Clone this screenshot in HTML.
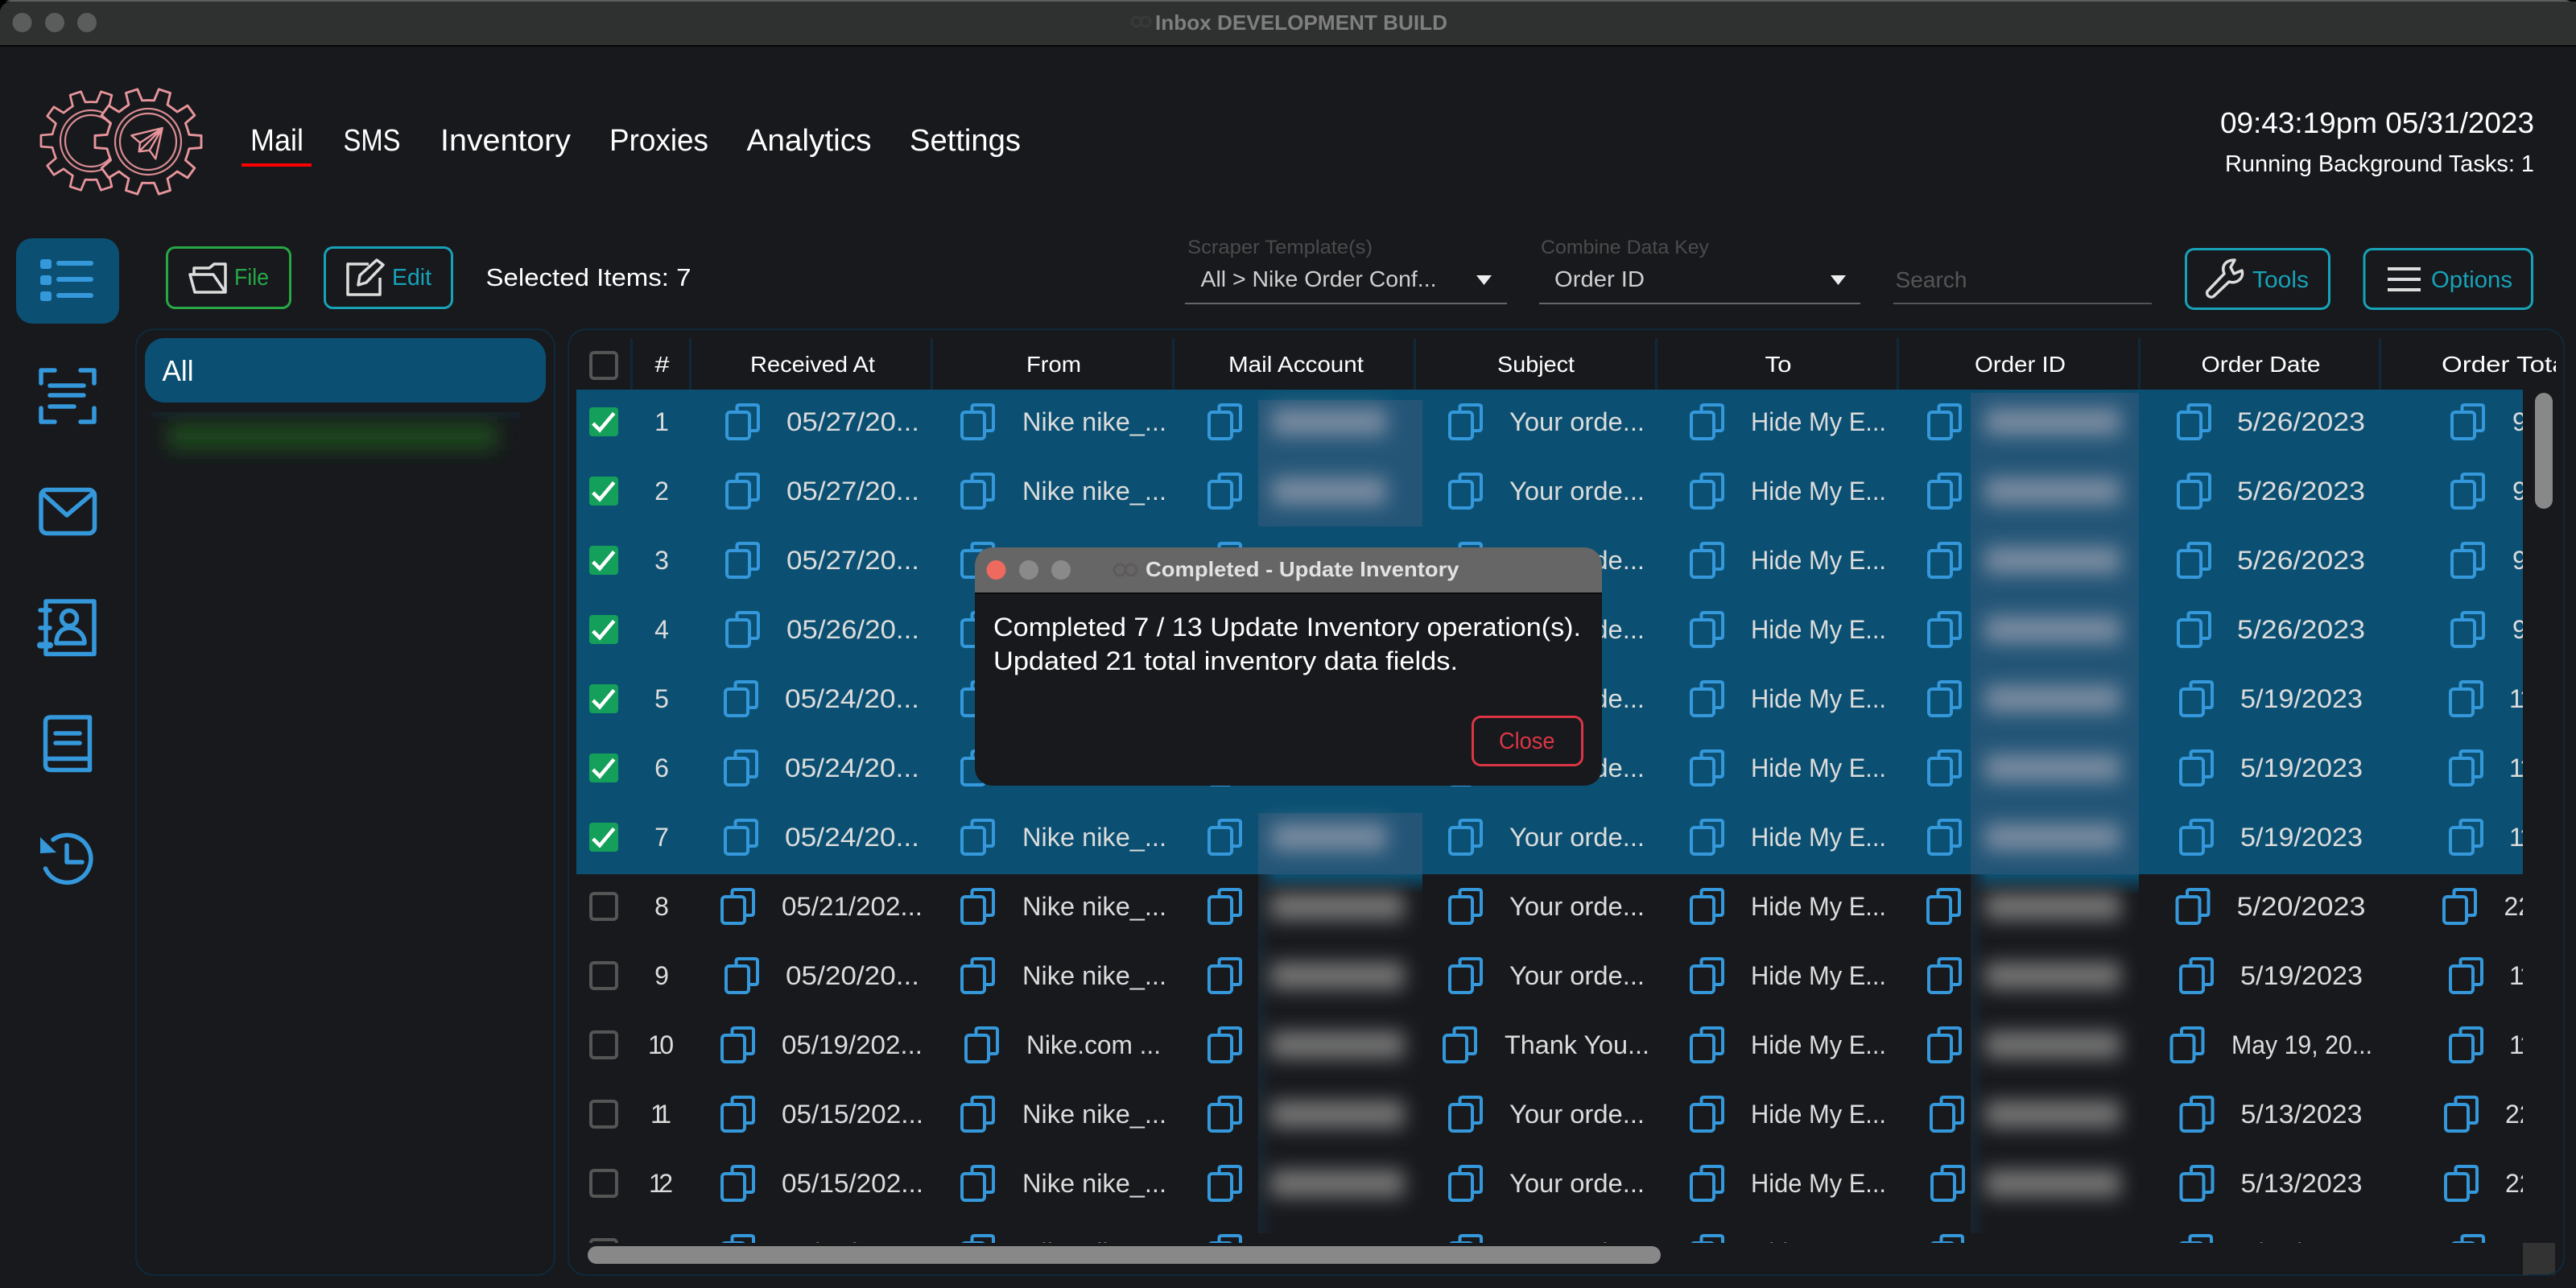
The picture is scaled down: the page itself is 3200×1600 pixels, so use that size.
<!DOCTYPE html>
<html><head><meta charset="utf-8"><title>Inbox DEVELOPMENT BUILD</title>
<style>
html,body{margin:0;padding:0;background:#17191d;width:3200px;height:1600px;overflow:hidden}
svg{display:block;font-family:"Liberation Sans",sans-serif}
.r text{font-size:32px;fill:#dcdcdc}
.r .n{text-anchor:middle}
.h text{font-size:28px;fill:#fff}
.nav text{font-size:38px;fill:#fff}
.bl{fill:none;stroke:#3498db;stroke-width:5.5;stroke-linecap:round;stroke-linejoin:round}
.wi{fill:none;stroke:#ddd;stroke-width:3.5;stroke-linejoin:round}
</style></head><body>
<svg width="3200" height="1600" viewBox="0 0 3200 1600" xmlns="http://www.w3.org/2000/svg">
<defs>
<filter id="b" x="-30%" y="-120%" width="160%" height="340%"><feGaussianBlur stdDeviation="12"/></filter>
<clipPath id="rows"><rect x="716" y="484" width="2418" height="1060"/></clipPath>
<clipPath id="mailc"><rect x="1563" y="484" width="204" height="1060"/></clipPath>
<clipPath id="ordc"><rect x="2448" y="484" width="209" height="1060"/></clipPath>
<clipPath id="hdc"><rect x="716" y="410" width="2459" height="74"/></clipPath>
<clipPath id="grc"><rect x="188" y="512" width="458" height="65"/></clipPath>
<linearGradient id="fd" x1="0" y1="0" x2="0" y2="1"><stop offset="0" stop-color="#0b5072"/><stop offset="1" stop-color="#0b5072" stop-opacity="0"/></linearGradient>
<linearGradient id="fl" x1="0" y1="0" x2="1" y2="0"><stop offset="0" stop-color="#19242e"/><stop offset="1" stop-color="#19242e" stop-opacity="0"/></linearGradient>
<linearGradient id="ft" x1="0" y1="0" x2="0" y2="1"><stop offset="0" stop-color="#18222c"/><stop offset="1" stop-color="#18222c" stop-opacity="0"/></linearGradient>
<g id="c" fill="none" stroke="#3498db" stroke-width="4" stroke-linejoin="round"><path d="M14.5 9V5q0-3 3-3H38q3 0 3 3V31q0 3-3 3H32"/><rect x="2" y="11" width="28" height="33" rx="4"/></g>
<g id="k"><rect width="36" height="36" rx="4" fill="#14a05a"/><path d="M4.7 20L13 28.3L30.7 7.3" fill="none" stroke="#fff" stroke-width="4.5"/></g>
<g id="u"><rect x="2" y="2" width="32" height="32" rx="4" fill="none" stroke="#555" stroke-width="4"/></g>
<path id="t" d="M-15.9-48.9L-8.7-51L-7.5-66H7.5L8.7-51L15.9-48.9"/>
<g id="gear" fill="#17191d" stroke="#e8959b" stroke-width="2.9" stroke-linejoin="round">
<circle r="50" stroke="none"/>
<use href="#t" transform="rotate(18)"/><use href="#t" transform="rotate(54)"/><use href="#t" transform="rotate(90)"/><use href="#t" transform="rotate(126)"/><use href="#t" transform="rotate(162)"/><use href="#t" transform="rotate(198)"/><use href="#t" transform="rotate(234)"/><use href="#t" transform="rotate(270)"/><use href="#t" transform="rotate(306)"/><use href="#t" transform="rotate(342)"/>
</g>
<g id="logo">
<g transform="translate(113,175) scale(.94)"><use href="#gear"/></g>
<g fill="none" stroke="#d98c92" stroke-width="2.2"><circle cx="113" cy="175" r="38"/><circle cx="113" cy="175" r="32"/></g>
<g transform="translate(184,176)"><use href="#gear"/></g>
<g fill="none" stroke="#d98c92" stroke-width="2.2"><circle cx="184" cy="176" r="41"/><circle cx="184" cy="176" r="35"/></g>
<path d="M201.7 159L163.3 168.3L174 177.3L172.7 188.3L185.7 186.7L193.3 197.3ZM201.7 159L174 177.3M201.7 159L172.7 188.3M201.7 159L185.7 186.7" fill="none" stroke="#e8959b" stroke-width="2.4" stroke-linejoin="round"/>
</g>
</defs>

<rect width="3200" height="1600" fill="#17191d"/>

<!-- title bar -->
<rect x="0" y="0" width="3200" height="58" fill="#000"/>
<rect x="0" y="0" width="3200" height="70" rx="14" fill="#5c5d5c"/>
<rect x="0" y="2" width="3200" height="54" fill="#2f3130"/>
<path d="M0 14a14 14 0 0 1 14-12H0Z" fill="#000"/>
<rect y="56" width="3200" height="2" fill="#050505"/>
<rect y="58" width="3200" height="14" fill="#17191d"/>
<circle cx="27.5" cy="28" r="12" fill="#5b5d5c"/><circle cx="68" cy="28" r="12" fill="#5b5d5c"/><circle cx="108" cy="28" r="12" fill="#5b5d5c"/>
<g fill="none" stroke="#383a39" stroke-width="3"><circle cx="1412" cy="27" r="6"/><circle cx="1423" cy="27" r="6"/></g>
<text x="1435" y="37" font-size="26" font-weight="bold" fill="#7e7f7e" textLength="363" lengthAdjust="spacingAndGlyphs">Inbox DEVELOPMENT BUILD</text>

<!-- logo & nav -->
<use href="#logo"/>
<g class="nav">
<text x="311" y="187" textLength="66" lengthAdjust="spacingAndGlyphs">Mail</text>
<text x="426.5" y="187" textLength="71" lengthAdjust="spacingAndGlyphs">SMS</text>
<text x="547" y="187" textLength="162" lengthAdjust="spacingAndGlyphs">Inventory</text>
<text x="757" y="187" textLength="123" lengthAdjust="spacingAndGlyphs">Proxies</text>
<text x="927.5" y="187" textLength="155" lengthAdjust="spacingAndGlyphs">Analytics</text>
<text x="1130" y="187" textLength="138" lengthAdjust="spacingAndGlyphs">Settings</text>
</g>
<rect x="300" y="203" width="87" height="4" fill="#f00"/>
<text x="2758" y="165" font-size="36" fill="#fff" textLength="390" lengthAdjust="spacingAndGlyphs">09:43:19pm 05/31/2023</text>
<text x="2764" y="213" font-size="29" fill="#fff" textLength="384" lengthAdjust="spacingAndGlyphs">Running Background Tasks: 1</text>

<!-- sidebar -->
<rect x="20" y="296" width="128" height="106" rx="20" fill="#0b5072"/>
<g fill="#3498db"><rect x="50" y="322" width="14" height="12" rx="3"/><rect x="50" y="342" width="14" height="12" rx="3"/><rect x="50" y="362" width="14" height="12" rx="3"/><rect x="70" y="324" width="46" height="6" rx="3"/><rect x="70" y="344" width="46" height="6" rx="3"/><rect x="70" y="364" width="46" height="6" rx="3"/></g>
<g class="bl">
<path d="M51 476V460H68M100 460H117V476M51 507V524H68M100 524H117V507"/>
<path d="M62 479H104M62 491H104M62 505H92"/>
<rect x="51" y="608.5" width="66.500" height="54" rx="7"/><path d="M53 613L83 640L115 613"/>
<path d="M57 747H117V812.500H57Z"/><path d="M50 758H62M50 780H62"/><path d="M50 801.500H62" stroke-width="8"/>
<circle cx="86" cy="768" r="9.500"/><path d="M70 799C70 786 78 780 86 780C95 780 105 787 105 799Z"/>
<path d="M63 891H111.500V956.500H64Q56.500 956.500 56.500 950V897Q56.500 891 63 891Z"/><path d="M69 911H99M69 923H99M57 942.500H111"/>
<path d="M56.500 1079A29.500 29.500 0 1 0 66 1043"/><path d="M83 1050V1071H102"/>
</g>
<path d="M50 1040V1060L70 1059Z" fill="#3498db"/>

<!-- toolbar -->
<rect x="207.500" y="307.500" width="153" height="75" rx="10" fill="none" stroke="#28a745" stroke-width="3"/>
<path class="wi" d="M241 341V333H260L266 328H280V363M236 341H265L280 363H242Z"/>
<text x="291" y="354" font-size="29" fill="#28a745" textLength="43" lengthAdjust="spacingAndGlyphs">File</text>
<rect x="403.500" y="307.500" width="158" height="75" rx="10" fill="none" stroke="#17a2b8" stroke-width="3"/>
<path class="wi" d="M458 328H432V366H472V345M445 354L447 342L468 323L476 329L455 351Z"/>
<text x="487" y="354" font-size="29" fill="#17a2b8" textLength="49" lengthAdjust="spacingAndGlyphs">Edit</text>
<text x="603.500" y="355" font-size="31" fill="#fff" textLength="255" lengthAdjust="spacingAndGlyphs">Selected Items: 7</text>

<text x="1475" y="315" font-size="24" fill="#4b4b4b" textLength="230" lengthAdjust="spacingAndGlyphs">Scraper Template(s)</text>
<text x="1491.500" y="356" font-size="28" fill="#cfcfcf" textLength="293" lengthAdjust="spacingAndGlyphs">All &gt; Nike Order Conf...</text>
<path d="M1834 342H1853L1843.500 354Z" fill="#eee"/>
<rect x="1472" y="376" width="400" height="2" fill="#666"/>
<text x="1914" y="315" font-size="24" fill="#4b4b4b" textLength="209" lengthAdjust="spacingAndGlyphs">Combine Data Key</text>
<text x="1931" y="356" font-size="28" fill="#cfcfcf" textLength="112" lengthAdjust="spacingAndGlyphs">Order ID</text>
<path d="M2274 342H2293L2283.500 354Z" fill="#eee"/>
<rect x="1912" y="376" width="399" height="2" fill="#666"/>
<text x="2354.500" y="357" font-size="28" fill="#555" textLength="89" lengthAdjust="spacingAndGlyphs">Search</text>
<rect x="2352" y="376" width="321" height="2" fill="#555"/>
<rect x="2715.500" y="309.500" width="178" height="74" rx="10" fill="none" stroke="#17a2b8" stroke-width="3"/>
<path class="wi" d="M2742 362L2763 340C2759 330 2765 323 2776 323L2771 332L2775 340L2785 336C2788 346 2778 353 2769 350L2750 368C2746 371 2740 367 2742 362Z"/>
<text x="2798" y="357" font-size="29" fill="#17a2b8" textLength="70" lengthAdjust="spacingAndGlyphs">Tools</text>
<rect x="2937" y="309.500" width="208.500" height="74" rx="10" fill="none" stroke="#17a2b8" stroke-width="3"/>
<path d="M2966 334H3007M2966 347H3007M2966 360H3007" stroke="#ddd" stroke-width="4" fill="none"/>
<text x="3020" y="357" font-size="29" fill="#17a2b8" textLength="101" lengthAdjust="spacingAndGlyphs">Options</text>

<!-- left panel -->
<rect x="169" y="409" width="520" height="1175" rx="22" fill="none" stroke="#10293a" stroke-width="2"/>
<rect x="180" y="420" width="498" height="80" rx="24" fill="#0b5072"/>
<text x="201.500" y="473" font-size="36" fill="#fff" textLength="39" lengthAdjust="spacingAndGlyphs">All</text>
<g clip-path="url(#grc)"><rect x="188" y="512" width="458" height="12" fill="url(#ft)"/><rect x="208" y="525" width="410" height="34" fill="#1d471a" filter="url(#b)"/></g>

<!-- table panel -->
<rect x="706" y="409" width="2479" height="1175" rx="22" fill="none" stroke="#10293a" stroke-width="2"/>
<g fill="#10293a"><rect x="783" y="420" width="3" height="64"/><rect x="856" y="420" width="3" height="64"/><rect x="1156" y="420" width="3" height="64"/><rect x="1456" y="420" width="3" height="64"/><rect x="1756" y="420" width="3" height="64"/><rect x="2056" y="420" width="3" height="64"/><rect x="2356" y="420" width="3" height="64"/><rect x="2656" y="420" width="3" height="64"/><rect x="2955" y="420" width="3" height="64"/></g>
<use href="#u" x="732" y="436"/>
<g class="h" clip-path="url(#hdc)">
<text x="813.500" y="462" textLength="18" lengthAdjust="spacingAndGlyphs">#</text>
<text x="932" y="462" textLength="155" lengthAdjust="spacingAndGlyphs">Received At</text>
<text x="1275" y="462" textLength="68" lengthAdjust="spacingAndGlyphs">From</text>
<text x="1526" y="462" textLength="168" lengthAdjust="spacingAndGlyphs">Mail Account</text>
<text x="1860" y="462" textLength="96" lengthAdjust="spacingAndGlyphs">Subject</text>
<text x="2192.500" y="462" textLength="33" lengthAdjust="spacingAndGlyphs">To</text>
<text x="2453" y="462" textLength="113" lengthAdjust="spacingAndGlyphs">Order ID</text>
<text x="2734.500" y="462" textLength="148" lengthAdjust="spacingAndGlyphs">Order Date</text>
<text x="3033" y="462" textLength="163" lengthAdjust="spacingAndGlyphs">Order Total</text>
</g>

<g clip-path="url(#rows)">
<rect x="716" y="484" width="2418" height="602" fill="#0b5072"/>
<!-- blocks behind blurred values -->
<rect x="1563" y="497" width="204" height="157" fill="#245577"/>
<rect x="1563" y="1010" width="204" height="76" fill="#245577"/>
<rect x="1563" y="1086" width="204" height="24" fill="url(#fd)"/>
<rect x="1563" y="1086" width="22" height="446" fill="url(#fl)"/>
<rect x="2448" y="488" width="209" height="598" fill="#225476"/>
<rect x="2448" y="1086" width="209" height="26" fill="url(#fd)"/>
<rect x="2448" y="1086" width="22" height="446" fill="url(#fl)"/>
<g clip-path="url(#mailc)">
<g fill="#798ba0" filter="url(#b)"><rect x="1580" y="507" width="142" height="34"/></g>
<g fill="#798ba0" filter="url(#b)"><rect x="1580" y="593" width="142" height="34"/></g>
<g fill="#798ba0" filter="url(#b)"><rect x="1580" y="1023" width="142" height="34"/></g>
<g fill="#757575" filter="url(#b)"><rect x="1578" y="1109" width="166" height="34"/></g>
<g fill="#757575" filter="url(#b)"><rect x="1578" y="1195" width="166" height="34"/></g>
<g fill="#757575" filter="url(#b)"><rect x="1578" y="1281" width="166" height="34"/></g>
<g fill="#757575" filter="url(#b)"><rect x="1578" y="1367" width="166" height="34"/></g>
<g fill="#757575" filter="url(#b)"><rect x="1578" y="1453" width="166" height="34"/></g>
</g>
<g clip-path="url(#ordc)">
<g fill="#798ba0" filter="url(#b)"><rect x="2466" y="507" width="168" height="34"/></g>
<g fill="#798ba0" filter="url(#b)"><rect x="2466" y="593" width="168" height="34"/></g>
<g fill="#798ba0" filter="url(#b)"><rect x="2466" y="679" width="168" height="34"/></g>
<g fill="#798ba0" filter="url(#b)"><rect x="2466" y="765" width="168" height="34"/></g>
<g fill="#798ba0" filter="url(#b)"><rect x="2466" y="851" width="168" height="34"/></g>
<g fill="#798ba0" filter="url(#b)"><rect x="2466" y="937" width="168" height="34"/></g>
<g fill="#798ba0" filter="url(#b)"><rect x="2466" y="1023" width="168" height="34"/></g>
<g fill="#757575" filter="url(#b)"><rect x="2466" y="1109" width="168" height="34"/></g>
<g fill="#757575" filter="url(#b)"><rect x="2466" y="1195" width="168" height="34"/></g>
<g fill="#757575" filter="url(#b)"><rect x="2466" y="1281" width="168" height="34"/></g>
<g fill="#757575" filter="url(#b)"><rect x="2466" y="1367" width="168" height="34"/></g>
<g fill="#757575" filter="url(#b)"><rect x="2466" y="1453" width="168" height="34"/></g>
</g>

<g class="r" transform="translate(0,535)"><use href="#k" x="732" y="-29"/><text class="n" x="822">1</text><use href="#c" x="901" y="-34"/><text x="977" textLength="165" lengthAdjust="spacingAndGlyphs">05/27/20...</text><use href="#c" x="1193" y="-34"/><text x="1270" textLength="179" lengthAdjust="spacingAndGlyphs">Nike nike_...</text><use href="#c" x="1500" y="-34"/><use href="#c" x="1799" y="-34"/><text x="1875" textLength="168" lengthAdjust="spacingAndGlyphs">Your orde...</text><use href="#c" x="2099" y="-34"/><text x="2175" textLength="168" lengthAdjust="spacingAndGlyphs">Hide My E...</text><use href="#c" x="2394" y="-34"/><use href="#c" x="2704" y="-34"/><text x="2779" textLength="159" lengthAdjust="spacingAndGlyphs">5/26/2023</text><use href="#c" x="3044" y="-34"/><text x="3121">90.00</text></g>
<g class="r" transform="translate(0,621)"><use href="#k" x="732" y="-29"/><text class="n" x="822">2</text><use href="#c" x="901" y="-34"/><text x="977" textLength="165" lengthAdjust="spacingAndGlyphs">05/27/20...</text><use href="#c" x="1193" y="-34"/><text x="1270" textLength="179" lengthAdjust="spacingAndGlyphs">Nike nike_...</text><use href="#c" x="1500" y="-34"/><use href="#c" x="1799" y="-34"/><text x="1875" textLength="168" lengthAdjust="spacingAndGlyphs">Your orde...</text><use href="#c" x="2099" y="-34"/><text x="2175" textLength="168" lengthAdjust="spacingAndGlyphs">Hide My E...</text><use href="#c" x="2394" y="-34"/><use href="#c" x="2704" y="-34"/><text x="2779" textLength="159" lengthAdjust="spacingAndGlyphs">5/26/2023</text><use href="#c" x="3044" y="-34"/><text x="3121">90.00</text></g>
<g class="r" transform="translate(0,707)"><use href="#k" x="732" y="-29"/><text class="n" x="822">3</text><use href="#c" x="901" y="-34"/><text x="977" textLength="165" lengthAdjust="spacingAndGlyphs">05/27/20...</text><use href="#c" x="1193" y="-34"/><text x="1270" textLength="179" lengthAdjust="spacingAndGlyphs">Nike nike_...</text><use href="#c" x="1500" y="-34"/><use href="#c" x="1799" y="-34"/><text x="1875" textLength="168" lengthAdjust="spacingAndGlyphs">Your orde...</text><use href="#c" x="2099" y="-34"/><text x="2175" textLength="168" lengthAdjust="spacingAndGlyphs">Hide My E...</text><use href="#c" x="2394" y="-34"/><use href="#c" x="2704" y="-34"/><text x="2779" textLength="159" lengthAdjust="spacingAndGlyphs">5/26/2023</text><use href="#c" x="3044" y="-34"/><text x="3121">90.00</text></g>
<g class="r" transform="translate(0,793)"><use href="#k" x="732" y="-29"/><text class="n" x="822">4</text><use href="#c" x="901" y="-34"/><text x="977" textLength="165" lengthAdjust="spacingAndGlyphs">05/26/20...</text><use href="#c" x="1193" y="-34"/><text x="1270" textLength="179" lengthAdjust="spacingAndGlyphs">Nike nike_...</text><use href="#c" x="1500" y="-34"/><use href="#c" x="1799" y="-34"/><text x="1875" textLength="168" lengthAdjust="spacingAndGlyphs">Your orde...</text><use href="#c" x="2099" y="-34"/><text x="2175" textLength="168" lengthAdjust="spacingAndGlyphs">Hide My E...</text><use href="#c" x="2394" y="-34"/><use href="#c" x="2704" y="-34"/><text x="2779" textLength="159" lengthAdjust="spacingAndGlyphs">5/26/2023</text><use href="#c" x="3044" y="-34"/><text x="3121">90.00</text></g>
<g class="r" transform="translate(0,879)"><use href="#k" x="732" y="-29"/><text class="n" x="822">5</text><use href="#c" x="899" y="-34"/><text x="975" textLength="167" lengthAdjust="spacingAndGlyphs">05/24/20...</text><use href="#c" x="1193" y="-34"/><text x="1270" textLength="179" lengthAdjust="spacingAndGlyphs">Nike nike_...</text><use href="#c" x="1500" y="-34"/><use href="#c" x="1799" y="-34"/><text x="1875" textLength="168" lengthAdjust="spacingAndGlyphs">Your orde...</text><use href="#c" x="2099" y="-34"/><text x="2175" textLength="168" lengthAdjust="spacingAndGlyphs">Hide My E...</text><use href="#c" x="2394" y="-34"/><use href="#c" x="2707" y="-34"/><text x="2783" textLength="152" lengthAdjust="spacingAndGlyphs">5/19/2023</text><use href="#c" x="3042" y="-34"/><text x="3117" textLength="66" lengthAdjust="spacing">11.00</text></g>
<g class="r" transform="translate(0,965)"><use href="#k" x="732" y="-29"/><text class="n" x="822">6</text><use href="#c" x="899" y="-34"/><text x="975" textLength="167" lengthAdjust="spacingAndGlyphs">05/24/20...</text><use href="#c" x="1193" y="-34"/><text x="1270" textLength="179" lengthAdjust="spacingAndGlyphs">Nike nike_...</text><use href="#c" x="1500" y="-34"/><use href="#c" x="1799" y="-34"/><text x="1875" textLength="168" lengthAdjust="spacingAndGlyphs">Your orde...</text><use href="#c" x="2099" y="-34"/><text x="2175" textLength="168" lengthAdjust="spacingAndGlyphs">Hide My E...</text><use href="#c" x="2394" y="-34"/><use href="#c" x="2707" y="-34"/><text x="2783" textLength="152" lengthAdjust="spacingAndGlyphs">5/19/2023</text><use href="#c" x="3042" y="-34"/><text x="3117" textLength="66" lengthAdjust="spacing">11.00</text></g>
<g class="r" transform="translate(0,1051)"><use href="#k" x="732" y="-29"/><text class="n" x="822">7</text><use href="#c" x="899" y="-34"/><text x="975" textLength="167" lengthAdjust="spacingAndGlyphs">05/24/20...</text><use href="#c" x="1193" y="-34"/><text x="1270" textLength="179" lengthAdjust="spacingAndGlyphs">Nike nike_...</text><use href="#c" x="1500" y="-34"/><use href="#c" x="1799" y="-34"/><text x="1875" textLength="168" lengthAdjust="spacingAndGlyphs">Your orde...</text><use href="#c" x="2099" y="-34"/><text x="2175" textLength="168" lengthAdjust="spacingAndGlyphs">Hide My E...</text><use href="#c" x="2394" y="-34"/><use href="#c" x="2707" y="-34"/><text x="2783" textLength="152" lengthAdjust="spacingAndGlyphs">5/19/2023</text><use href="#c" x="3042" y="-34"/><text x="3117" textLength="66" lengthAdjust="spacing">11.00</text></g>
<g class="r" transform="translate(0,1137)"><use href="#u" x="732" y="-29"/><text class="n" x="822">8</text><use href="#c" x="895" y="-34"/><text x="971" textLength="175" lengthAdjust="spacingAndGlyphs">05/21/202...</text><use href="#c" x="1193" y="-34"/><text x="1270" textLength="179" lengthAdjust="spacingAndGlyphs">Nike nike_...</text><use href="#c" x="1500" y="-34"/><use href="#c" x="1799" y="-34"/><text x="1875" textLength="168" lengthAdjust="spacingAndGlyphs">Your orde...</text><use href="#c" x="2099" y="-34"/><text x="2175" textLength="168" lengthAdjust="spacingAndGlyphs">Hide My E...</text><use href="#c" x="2393" y="-34"/><use href="#c" x="2702.500" y="-34"/><text x="2778.500" textLength="160" lengthAdjust="spacingAndGlyphs">5/20/2023</text><use href="#c" x="3034" y="-34"/><text x="3110.500">22.00</text></g>
<g class="r" transform="translate(0,1223)"><use href="#u" x="732" y="-29"/><text class="n" x="822">9</text><use href="#c" x="900" y="-34"/><text x="976" textLength="166" lengthAdjust="spacingAndGlyphs">05/20/20...</text><use href="#c" x="1193" y="-34"/><text x="1270" textLength="179" lengthAdjust="spacingAndGlyphs">Nike nike_...</text><use href="#c" x="1500" y="-34"/><use href="#c" x="1799" y="-34"/><text x="1875" textLength="168" lengthAdjust="spacingAndGlyphs">Your orde...</text><use href="#c" x="2099" y="-34"/><text x="2175" textLength="168" lengthAdjust="spacingAndGlyphs">Hide My E...</text><use href="#c" x="2394" y="-34"/><use href="#c" x="2707" y="-34"/><text x="2783" textLength="152" lengthAdjust="spacingAndGlyphs">5/19/2023</text><use href="#c" x="3042" y="-34"/><text x="3117" textLength="66" lengthAdjust="spacing">11.00</text></g>
<g class="r" transform="translate(0,1309)"><use href="#u" x="732" y="-29"/><text class="n" x="821" textLength="32" lengthAdjust="spacing">10</text><use href="#c" x="895" y="-34"/><text x="971" textLength="175" lengthAdjust="spacingAndGlyphs">05/19/202...</text><use href="#c" x="1198" y="-34"/><text x="1275" textLength="167" lengthAdjust="spacingAndGlyphs">Nike.com ...</text><use href="#c" x="1500" y="-34"/><use href="#c" x="1792" y="-34"/><text x="1869" textLength="180" lengthAdjust="spacingAndGlyphs">Thank You...</text><use href="#c" x="2099" y="-34"/><text x="2175" textLength="168" lengthAdjust="spacingAndGlyphs">Hide My E...</text><use href="#c" x="2394" y="-34"/><use href="#c" x="2695.500" y="-34"/><text x="2772" textLength="175" lengthAdjust="spacingAndGlyphs">May 19, 20...</text><use href="#c" x="3042" y="-34"/><text x="3117" textLength="66" lengthAdjust="spacing">11.00</text></g>
<g class="r" transform="translate(0,1395)"><use href="#u" x="732" y="-29"/><text class="n" x="821" textLength="26" lengthAdjust="spacing">11</text><use href="#c" x="895" y="-34"/><text x="971" textLength="176" lengthAdjust="spacingAndGlyphs">05/15/202...</text><use href="#c" x="1193" y="-34"/><text x="1270" textLength="179" lengthAdjust="spacingAndGlyphs">Nike nike_...</text><use href="#c" x="1500" y="-34"/><use href="#c" x="1799" y="-34"/><text x="1875" textLength="168" lengthAdjust="spacingAndGlyphs">Your orde...</text><use href="#c" x="2099" y="-34"/><text x="2175" textLength="168" lengthAdjust="spacingAndGlyphs">Hide My E...</text><use href="#c" x="2397" y="-34"/><use href="#c" x="2707.500" y="-34"/><text x="2783.500" textLength="151" lengthAdjust="spacingAndGlyphs">5/13/2023</text><use href="#c" x="3036" y="-34"/><text x="3112">22.00</text></g>
<g class="r" transform="translate(0,1481)"><use href="#u" x="732" y="-29"/><text class="n" x="821" textLength="30" lengthAdjust="spacing">12</text><use href="#c" x="895" y="-34"/><text x="971" textLength="176" lengthAdjust="spacingAndGlyphs">05/15/202...</text><use href="#c" x="1193" y="-34"/><text x="1270" textLength="179" lengthAdjust="spacingAndGlyphs">Nike nike_...</text><use href="#c" x="1500" y="-34"/><use href="#c" x="1799" y="-34"/><text x="1875" textLength="168" lengthAdjust="spacingAndGlyphs">Your orde...</text><use href="#c" x="2099" y="-34"/><text x="2175" textLength="168" lengthAdjust="spacingAndGlyphs">Hide My E...</text><use href="#c" x="2398" y="-34"/><use href="#c" x="2707.500" y="-34"/><text x="2783.500" textLength="151" lengthAdjust="spacingAndGlyphs">5/13/2023</text><use href="#c" x="3036" y="-34"/><text x="3112">22.00</text></g>
<g class="r" transform="translate(0,1567)"><use href="#u" x="732" y="-29"/><text class="n" x="821" textLength="32" lengthAdjust="spacing">13</text><use href="#c" x="895" y="-34"/><text x="971" textLength="175" lengthAdjust="spacingAndGlyphs">05/10/202...</text><use href="#c" x="1193" y="-34"/><text x="1270" textLength="179" lengthAdjust="spacingAndGlyphs">Nike nike_...</text><use href="#c" x="1500" y="-34"/><use href="#c" x="1799" y="-34"/><text x="1875" textLength="168" lengthAdjust="spacingAndGlyphs">Your orde...</text><use href="#c" x="2099" y="-34"/><text x="2175" textLength="168" lengthAdjust="spacingAndGlyphs">Hide My E...</text><use href="#c" x="2397" y="-34"/><use href="#c" x="2706" y="-34"/><text x="2782" textLength="152" lengthAdjust="spacingAndGlyphs">5/10/2023</text><use href="#c" x="3044" y="-34"/><text x="3121">90.00</text></g>
</g>

<!-- scrollbars -->
<rect x="3149" y="488" width="22" height="144" rx="11" fill="#888"/>
<rect x="730" y="1548" width="1333" height="22" rx="11" fill="#888"/>
<rect x="3134" y="1544" width="40" height="40" fill="#333"/>
<path d="M3185 1562V1562a22 22 0 0 1-22 22H3140" fill="none" stroke="#10293a" stroke-width="2"/>

<!-- dialog -->
<rect x="1211" y="680" width="779" height="296" rx="22" fill="#17191d"/>
<path d="M1211 736V702a22 22 0 0 1 22-22H1968a22 22 0 0 1 22 22V736Z" fill="#666"/>
<rect x="1211" y="736" width="779" height="2" fill="#0a0a0a"/>
<circle cx="1237.500" cy="708" r="12" fill="#ee6a5f"/><circle cx="1278" cy="708" r="12" fill="#8a8a8a"/><circle cx="1318" cy="708" r="12" fill="#8a8a8a"/>
<g fill="none" stroke="#5f5a5a" stroke-width="3"><circle cx="1391" cy="708" r="7"/><circle cx="1405" cy="708" r="7"/></g>
<text x="1423" y="716" font-size="26" font-weight="bold" fill="#e2e2e2" textLength="389.500" lengthAdjust="spacingAndGlyphs">Completed - Update Inventory</text>
<text x="1234" y="790" font-size="32" fill="#fff" textLength="730" lengthAdjust="spacingAndGlyphs">Completed 7 / 13 Update Inventory operation(s).</text>
<text x="1234" y="832" font-size="32" fill="#fff" textLength="577" lengthAdjust="spacingAndGlyphs">Updated 21 total inventory data fields.</text>
<rect x="1829.500" y="890.500" width="136" height="60" rx="10" fill="none" stroke="#dc3545" stroke-width="3"/>
<text x="1862" y="930" font-size="29" fill="#dc3545" textLength="69.500" lengthAdjust="spacingAndGlyphs">Close</text>
</svg>
</body></html>
